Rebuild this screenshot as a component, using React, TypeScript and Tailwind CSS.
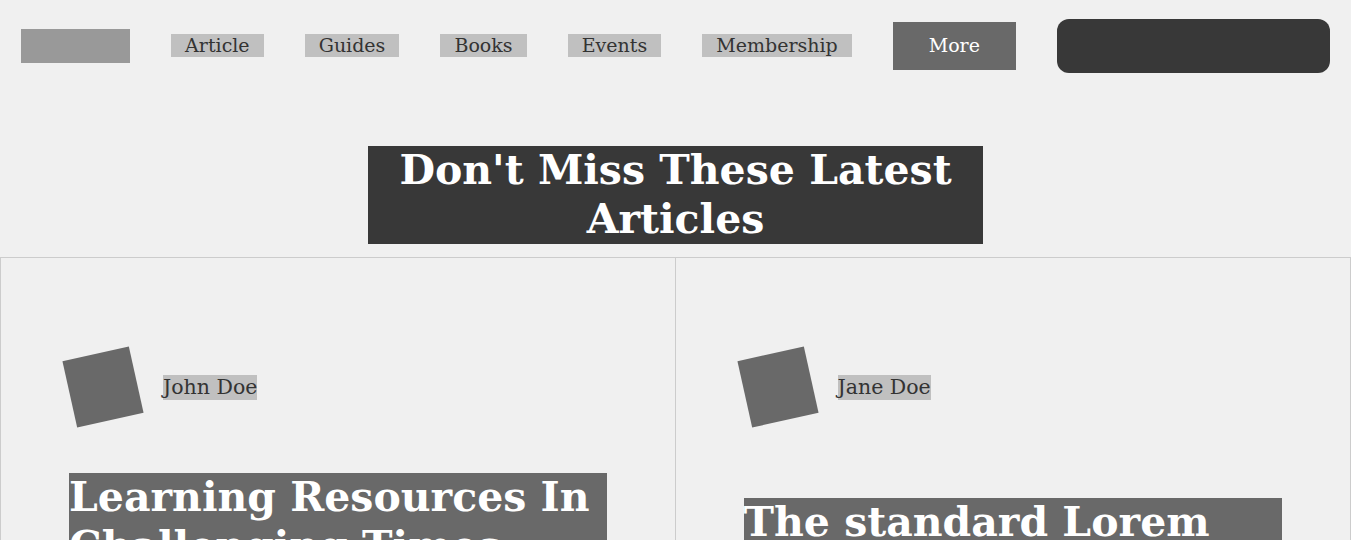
import React from "react";

const serif = { fontFamily: '"DejaVu Serif", "Liberation Serif", serif' };

function NavLink({ label }: { label: string }) {
  return (
    <a className="mb-[2px] bg-[#c0c0c0] px-[14px] text-[19px] leading-[23px] text-[#333333]">{label}</a>
  );
}

function Card({ name, title, titleMt, first }: { name: string; title: string; titleMt: string; first?: boolean }) {
  return (
    <div className={`${first ? "border-l" : ""} border-r border-[#cccccc] px-[68px] pt-[95px]`}>
      <div className="flex items-center gap-[26px]">
        <div className="h-[68px] w-[68px] rotate-[-12.5deg] bg-[#696969]" />
        <span className="bg-[#c0c0c0] text-[20.5px] leading-[25px] text-[#333333]">{name}</span>
      </div>
      <h3 className={`${titleMt} bg-[#696969] text-[41px] font-bold leading-[49px] text-white`}>{title}</h3>
    </div>
  );
}

export default function App() {
  return (
    <div className="min-h-screen bg-[#f0f0f0]" style={serif}>
      <nav className="flex items-center justify-between px-[21px] py-[19px]">
        <div className="h-[34px] w-[109px] bg-[#999999]" />
        <NavLink label="Article" />
        <NavLink label="Guides" />
        <NavLink label="Books" />
        <NavLink label="Events" />
        <NavLink label="Membership" />
        <button className="flex h-[48px] w-[123px] items-center justify-center bg-[#696969] pb-[2px] text-[19px] text-white">
          More
        </button>
        <div className="h-[54px] w-[273px] rounded-[12px] bg-[#383838]" />
      </nav>
      <div className="flex justify-center pt-[54px] pb-[13px]">
        <h2 className="w-[615px] bg-[#383838] text-center text-[41px] font-bold leading-[49px] text-white">
          Don't Miss These Latest Articles
        </h2>
      </div>
      <div className="grid grid-cols-2 border-t border-[#cccccc]">
        <Card first name="John Doe" title="Learning Resources In Challenging Times" titleMt="mt-[52px]" />
        <Card name="Jane Doe" title="The standard Lorem Ipsum passage" titleMt="mt-[77px]" />
      </div>
    </div>
  );
}
